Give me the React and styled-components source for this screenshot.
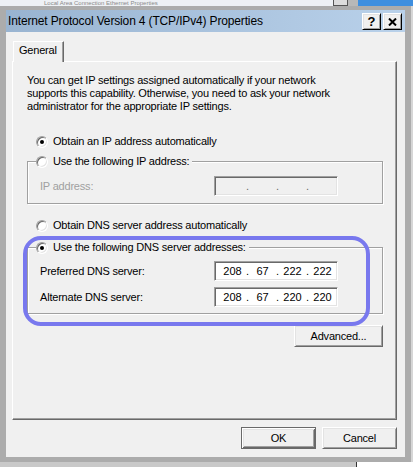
import React from "react";
import styled, { createGlobalStyle, css } from "styled-components";

const GlobalStyle = createGlobalStyle`
  html, body { margin: 0; padding: 0; }
  body {
    font-family: "Liberation Sans", Arial, sans-serif;
    font-size: 11px;
    color: #000;
    background: #d8d8d8;
  }
  * { box-sizing: border-box; }
`;

const Screen = styled.div`
  width: 413px;
  height: 467px;
  overflow: hidden;
  display: flex;
  flex-direction: column;
  background: #d8d8d8;
`;

const BackStrip = styled.div`
  height: 6px;
  flex-shrink: 0;
  display: flex;
  overflow: hidden;
  background: #eef1f5;
`;

const BackTitle = styled.div`
  flex: 1;
  height: 6px;
  padding-left: 44px;
  font-size: 6px;
  line-height: 6px;
  color: #8a8a8a;
  white-space: nowrap;
  overflow: hidden;
`;

const BackControl = styled.div`
  width: 15px;
  background: #dcdcdc;
  border: 1px solid #555;
  border-top: none;
`;

const BackGap = styled.div`
  width: 10px;
  background: #b8b8b8;
`;

const BackBlue = styled.div`
  width: 55px;
  background: #3f8fdf;
`;

const MiddleRow = styled.div`
  display: flex;
  height: 456px;
  flex-shrink: 0;
`;

const RightEdge = styled.div`
  flex: 1;
  background: #d6d6d6;
`;

const Dialog = styled.div`
  width: 411px;
  height: 456px;
  background: #acacac;
  padding: 4px 6px 5px 6px;
  display: flex;
  flex-direction: column;
`;

const TitleBar = styled.div`
  height: 22px;
  display: flex;
  align-items: flex-start;
  padding: 0 3px 0 2px;
  background: linear-gradient(to right, #99b4d1, #b9d1ea);
`;

const TitleText = styled.div`
  flex: 1;
  font-size: 12px;
  letter-spacing: -0.15px;
  line-height: 22px;
  white-space: nowrap;
`;

const CaptionButtons = styled.div`
  display: flex;
  gap: 2px;
  margin-top: 3px;
`;

const CaptionButton = styled.div`
  width: 19px;
  height: 17px;
  background: #f0f0f0;
  border: 1px solid;
  border-color: #fff #000 #000 #fff;
  box-shadow: inset 1px 1px 0 #e3e3e3, inset -1px -1px 0 #a0a0a0;
  display: flex;
  align-items: center;
  justify-content: center;
  font-size: 13px;
  font-weight: bold;
  line-height: 1;
`;

const Client = styled.div`
  flex: 1;
  background: #f0f0f0;
  padding: 9px 8px 8px 6px;
  display: flex;
  flex-direction: column;
`;

const TabRow = styled.div`
  height: 20px;
  display: flex;
  padding-left: 1px;
`;

const Tab = styled.div`
  position: relative;
  z-index: 1;
  width: 51px;
  height: 21px;
  background: #f0f0f0;
  border-top: 1px solid #fff;
  border-left: 1px solid #fff;
  border-right: 1px solid #696969;
  box-shadow: inset -1px 0 0 #a0a0a0;
  padding-left: 5px;
  line-height: 17px;
  letter-spacing: -0.2px;
`;

const Panel = styled.div`
  position: relative;
  height: 359px;
  border-top: 1px solid #fff;
  border-left: 1px solid #fff;
  border-right: 1px solid #696969;
  border-bottom: 1px solid #696969;
  box-shadow: inset -1px -1px 0 #a0a0a0;
  padding: 12px 13px 0 14px;
  display: flex;
  flex-direction: column;
`;

const Intro = styled.p`
  margin: 0;
  line-height: 13px;
  letter-spacing: -0.2px;
`;

const RadioRow = styled.div`
  display: flex;
  align-items: center;
  gap: 5px;
  height: 13px;
  padding-left: 9px;
  margin-top: ${(p) => p.$mt}px;
  line-height: 13px;
  letter-spacing: -0.2px;
  white-space: nowrap;
`;

const RadioDot = styled.span`
  position: relative;
  flex-shrink: 0;
  width: 12px;
  height: 12px;
  border-radius: 50%;
  background: #fff;
  border: 1px solid;
  border-color: #a0a0a0 #fff #fff #a0a0a0;
  box-shadow: inset 1px 1px 0 #696969, inset -1px -1px 0 #e3e3e3;
  ${(p) =>
    p.$checked &&
    css`
      &::after {
        content: "";
        position: absolute;
        left: 3px;
        top: 3px;
        width: 4px;
        height: 4px;
        border-radius: 50%;
        background: #000;
      }
    `}
`;

const GroupBox = styled.fieldset`
  margin: ${(p) => p.$mt}px 0 0 0;
  padding: 0;
  min-width: 0;
  border: 1px solid #a0a0a0;
  box-shadow: 1px 1px 0 #fff, inset 1px 1px 0 #fff;
`;

const Legend = styled.legend`
  margin-left: 8px;
  padding: 0 3px 0 0;
  background: #f0f0f0;
`;

const LegendInner = styled.span`
  display: flex;
  align-items: center;
  gap: 5px;
  height: 13px;
  line-height: 13px;
  letter-spacing: -0.2px;
  white-space: nowrap;
`;

const GroupContent = styled.div`
  display: flex;
  flex-direction: column;
  gap: 6px;
  padding: ${(p) => p.$pt}px 0 ${(p) => p.$pb}px 12px;
`;

const FieldRow = styled.div`
  display: flex;
  align-items: center;
  height: 20px;
`;

const FieldLabel = styled.span`
  width: 174px;
  letter-spacing: -0.2px;
  color: ${(p) => (p.$disabled ? "#a0a0a0" : "#000")};
`;

const IpBox = styled.div`
  width: 124px;
  height: 20px;
  display: flex;
  align-items: center;
  padding-left: 5px;
  border: 1px solid;
  border-color: #a0a0a0 #fff #fff #a0a0a0;
  box-shadow: inset 1px 1px 0 #696969, inset -1px -1px 0 #e3e3e3;
  background: ${(p) => (p.$disabled ? "#f0f0f0" : "#fff")};
  color: ${(p) => (p.$disabled ? "#6d6d6d" : "#000")};
`;

const Octet = styled.span`
  width: 25px;
  text-align: center;
`;

const Dot = styled.span`
  width: 5px;
  text-align: center;
`;

const ButtonRow = styled.div`
  display: flex;
  justify-content: flex-end;
  gap: 6px;
  margin-top: ${(p) => p.$mt}px;
`;

const Button = styled.div`
  width: ${(p) => p.$w}px;
  height: 22px;
  display: flex;
  align-items: center;
  justify-content: center;
  background: #f0f0f0;
  letter-spacing: -0.2px;
  border: 1px solid;
  border-color: #fff #696969 #696969 #fff;
  box-shadow: inset 1px 1px 0 #e3e3e3, inset -1px -1px 0 #a0a0a0;
  ${(p) =>
    p.$default &&
    css`
      border-color: #696969;
      box-shadow: inset 1px 1px 0 #fff, inset -1px -1px 0 #696969,
        inset 2px 2px 0 #e3e3e3, inset -2px -2px 0 #a0a0a0;
    `}
`;

const Highlight = styled.div`
  position: absolute;
  left: 10px;
  top: 174px;
  width: 347px;
  height: 90px;
  border: 4px solid #7878ee;
  border-radius: 18px;
  pointer-events: none;
`;

const BottomStrip = styled.div`
  height: 5px;
  flex-shrink: 0;
  display: flex;
`;

const BottomLeft = styled.div`
  width: 357px;
  background: #c9c9c9;
  border-right: 1px solid #333;
`;

const BottomRight = styled.div`
  flex: 1;
  background: #fff;
`;

const IpField = ({ value, disabled }) => {
  const parts = value || ["", "", "", ""];
  return (
    <IpBox $disabled={disabled}>
      {parts.map((p, i) => (
        <React.Fragment key={i}>
          <Octet>{p}</Octet>
          {i < 3 && <Dot>.</Dot>}
        </React.Fragment>
      ))}
    </IpBox>
  );
};

const CloseGlyph = () => (
  <svg width="9" height="8" viewBox="0 0 9 8">
    <path d="M1 0.5 L8 7.5 M8 0.5 L1 7.5" stroke="#000" strokeWidth="2" fill="none" />
  </svg>
);

export default function App() {
  return (
    <Screen>
      <GlobalStyle />
      <BackStrip>
        <BackTitle>Local Area Connection Ethernet Properties</BackTitle>
        <BackControl />
        <BackGap />
        <BackBlue />
      </BackStrip>
      <MiddleRow>
        <Dialog>
          <TitleBar>
            <TitleText>Internet Protocol Version 4 (TCP/IPv4) Properties</TitleText>
            <CaptionButtons>
              <CaptionButton>?</CaptionButton>
              <CaptionButton>
                <CloseGlyph />
              </CaptionButton>
            </CaptionButtons>
          </TitleBar>
          <Client>
            <TabRow>
              <Tab>General</Tab>
            </TabRow>
            <Panel>
              <Intro>
                You can get IP settings assigned automatically if your network
                <br />
                supports this capability. Otherwise, you need to ask your network
                <br />
                administrator for the appropriate IP settings.
              </Intro>
              <RadioRow $mt={22}>
                <RadioDot $checked />
                Obtain an IP address automatically
              </RadioRow>
              <GroupBox $mt={7}>
                <Legend>
                  <LegendInner>
                    <RadioDot />
                    Use the following IP address:
                  </LegendInner>
                </Legend>
                <GroupContent $pt={8} $pb={7}>
                  <FieldRow>
                    <FieldLabel $disabled>IP address:</FieldLabel>
                    <IpField disabled />
                  </FieldRow>
                </GroupContent>
              </GroupBox>
              <RadioRow $mt={15}>
                <RadioDot />
                Obtain DNS server address automatically
              </RadioRow>
              <GroupBox $mt={9}>
                <Legend>
                  <LegendInner>
                    <RadioDot $checked />
                    Use the following DNS server addresses:
                  </LegendInner>
                </Legend>
                <GroupContent $pt={7} $pb={6}>
                  <FieldRow>
                    <FieldLabel>Preferred DNS server:</FieldLabel>
                    <IpField value={["208", "67", "222", "222"]} />
                  </FieldRow>
                  <FieldRow>
                    <FieldLabel>Alternate DNS server:</FieldLabel>
                    <IpField value={["208", "67", "220", "220"]} />
                  </FieldRow>
                </GroupContent>
              </GroupBox>
              <ButtonRow $mt={11}>
                <Button $w={89}>Advanced...</Button>
              </ButtonRow>
              <Highlight />
            </Panel>
            <ButtonRow $mt={7}>
              <Button $w={75} $default>
                OK
              </Button>
              <Button $w={75}>Cancel</Button>
            </ButtonRow>
          </Client>
        </Dialog>
        <RightEdge />
      </MiddleRow>
      <BottomStrip>
        <BottomLeft />
        <BottomRight />
      </BottomStrip>
    </Screen>
  );
}
